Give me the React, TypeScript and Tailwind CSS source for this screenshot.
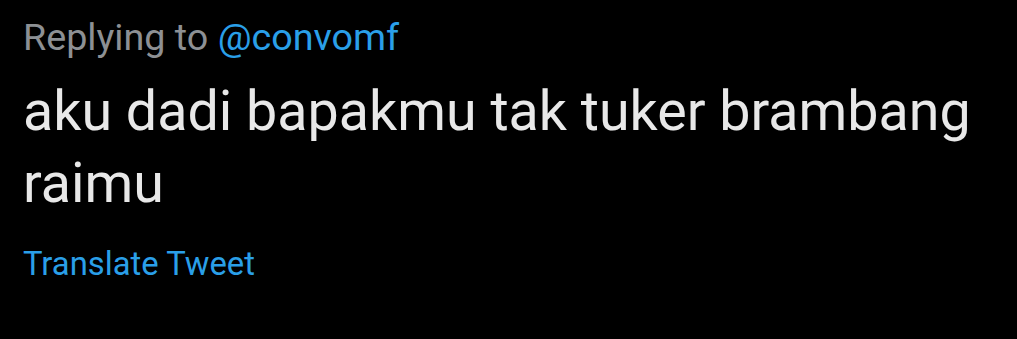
export default function App() {
  return (
    <div className="w-[1017px] h-[339px] bg-black overflow-hidden font-['Roboto',sans-serif] pl-[23px]">
      <div className="pt-[15px] text-[37.7px] leading-[44px] text-[#8d9094]">
        Replying to <span className="text-[#2a9fe8]">@convomf</span>
      </div>
      <div className="mt-[16px] text-[55.6px] leading-[72px] text-[#e8e8e8]">
        aku dadi bapakmu tak tuker brambang raimu
      </div>
      <div className="mt-[25px] text-[32.8px] leading-[40px] text-[#2a9fe8]">Translate Tweet</div>
    </div>
  );
}
